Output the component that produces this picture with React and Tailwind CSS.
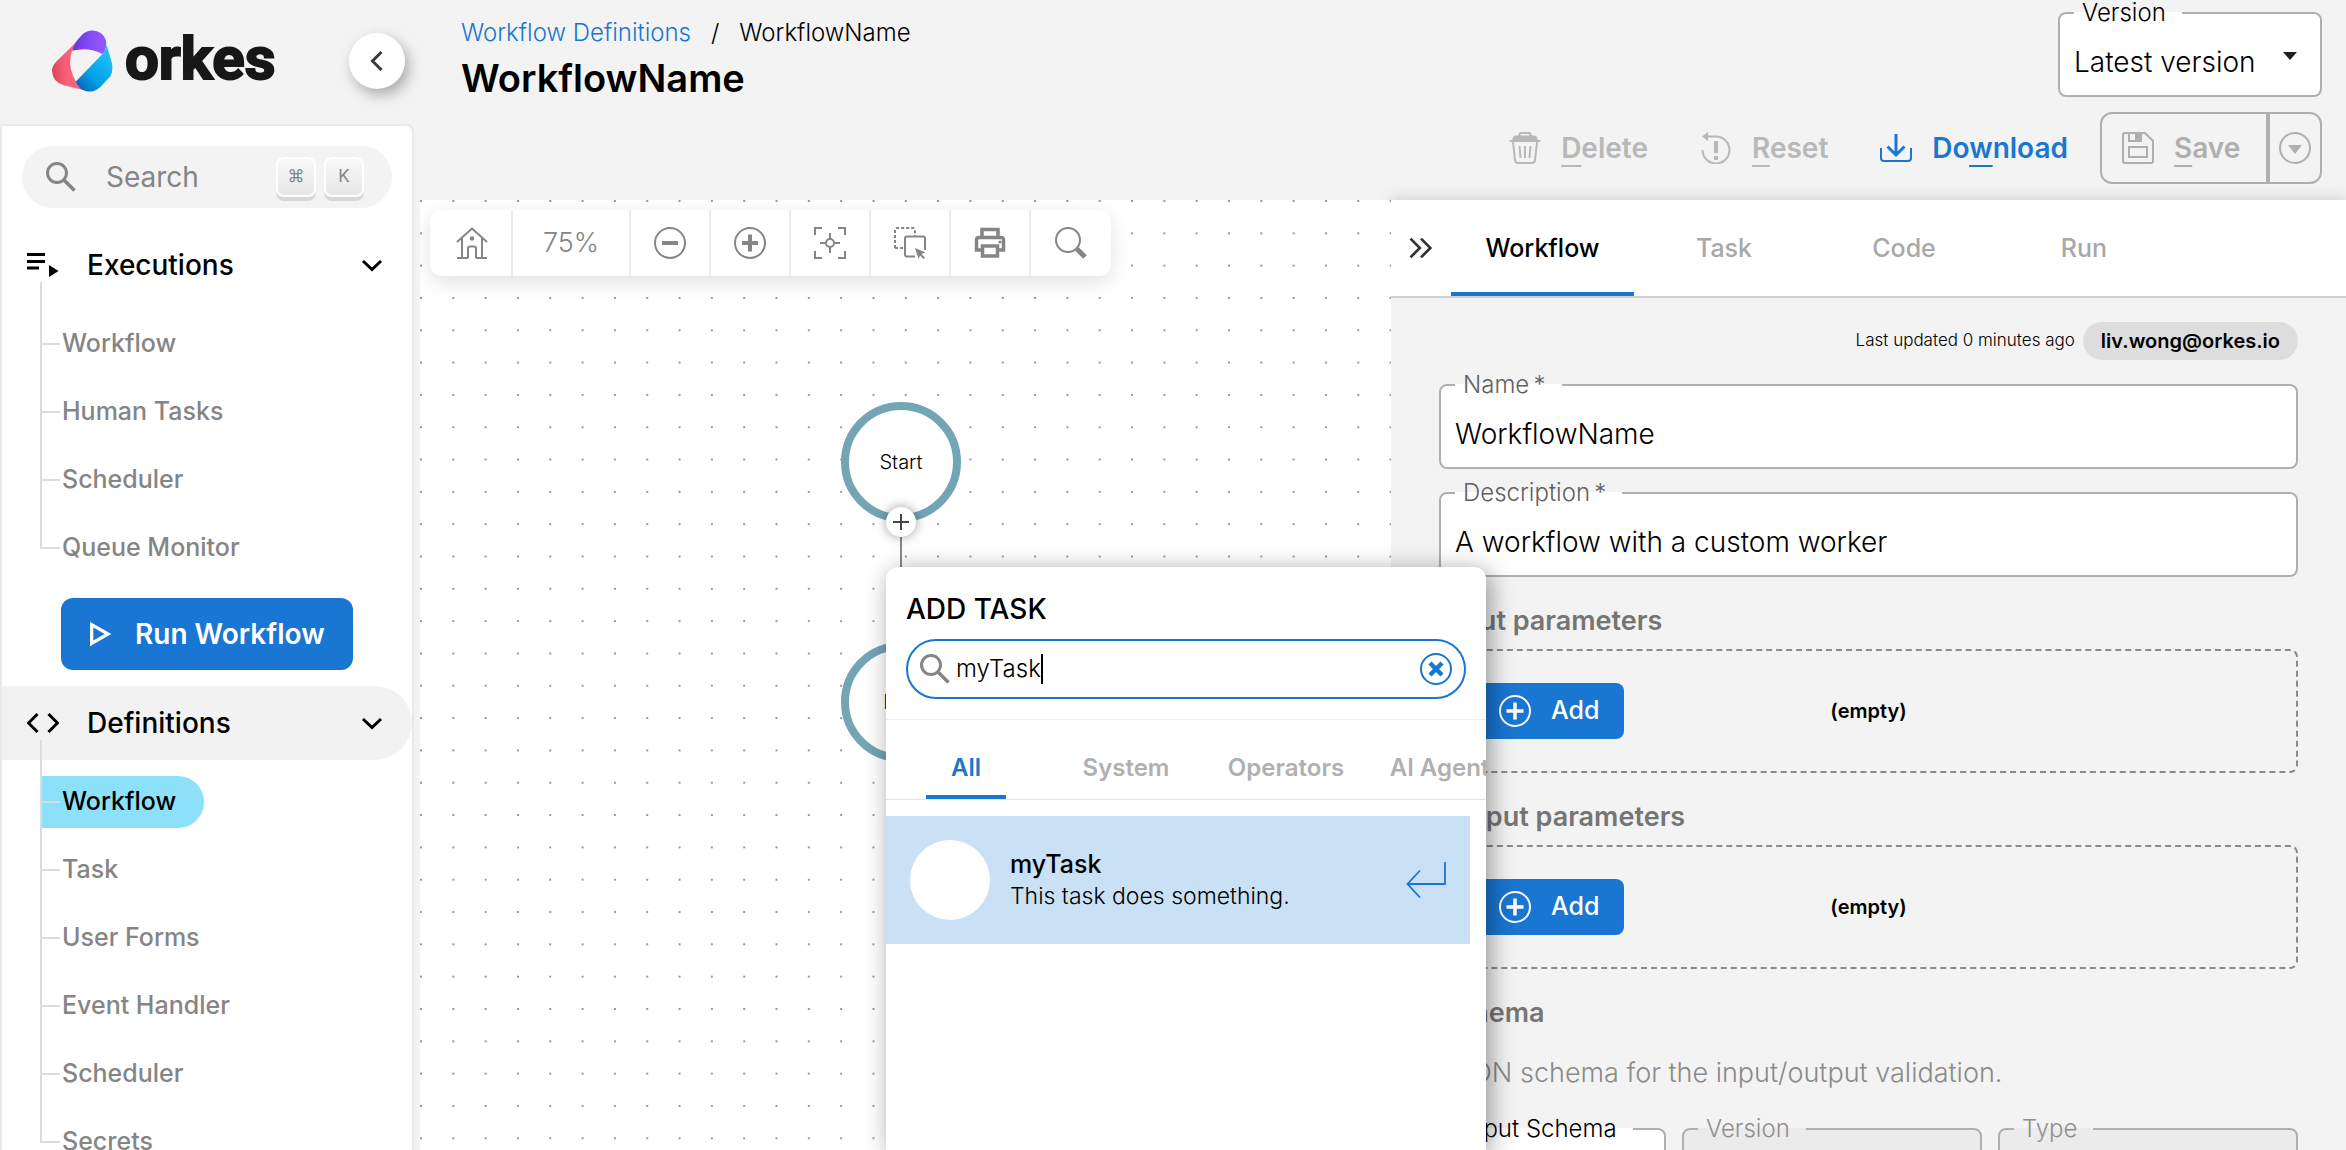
import { useState } from "react";

const EXECUTIONS = ["Workflow", "Human Tasks", "Scheduler", "Queue Monitor"];

const DEFINITIONS = [
  "Workflow",
  "Task",
  "User Forms",
  "Event Handler",
  "Scheduler",
  "Secrets",
];

const PANEL_TABS = ["Task", "Code", "Run"];
const TASK_TABS = ["All", "System", "Operators", "AI Agents"];

/* ICONS */
function Icon({ children, box = "0 0 32 32", className = "size-8" }) {
  return (
    <svg
      viewBox={box}
      className={`shrink-0 ${className}`}
      fill="none"
      stroke="currentColor"
      strokeWidth="2"
      aria-hidden="true"
    >
      {children}
    </svg>
  );
}

function LogoMark() {
  return (
    <svg viewBox="156 86 186 188" className="h-[62px] w-[61px] shrink-0" aria-hidden="true">
      <defs>
        <linearGradient id="red" x1="0" x2="1" y1="0.6" y2="0.5">
          <stop offset="0" stopColor="#d9465f" />
          <stop offset="0.5" stopColor="#fb6179" />
        </linearGradient>
        <linearGradient id="purple" x1="0" x2="1" y1="0.5" y2="0.5">
          <stop offset="0" stopColor="#6a35d9" />
          <stop offset="0.8" stopColor="#9156ff" />
        </linearGradient>
        <linearGradient id="blue" x1="0.2" x2="0.8" y1="1" y2="0.2">
          <stop offset="0" stopColor="#0068b8" />
          <stop offset="0.4" stopColor="#049fe8" />
          <stop offset="1" stopColor="#1abdf5" />
        </linearGradient>
      </defs>
      <path
        d="M240 112 L168 183 Q156 196 156 210 Q158 246 192 254 L248 268 L229 243 Q206 205 213 165 Q218 138 240 112Z"
        fill="url(#red)"
      />
      <path
        d="M310 159 Q321 146 323 132 L339 188 Q343 214 333 228 L300 262 Q286 273 270 273 Q252 272 241 262 L228 243Z"
        fill="url(#blue)"
      />
      <path
        d="M218 149 Q223 127 238 111 L250 98 Q262 87 280 87 Q310 88 320 116 Q326 140 310 159 Q268 136 218 149Z"
        fill="url(#purple)"
      />
    </svg>
  );
}

function SearchIcon({ className }) {
  return (
    <Icon box="0 0 30 30" className={className}>
      <circle cx="11" cy="11" r="9.5" strokeWidth="3" />
      <path d="M18 18 L28.5 28.5" strokeWidth="3.5" />
    </Icon>
  );
}

function PlusCircle() {
  return (
    <Icon>
      <circle cx="16" cy="16" r="15" />
      <path d="M16 7.5V24.5M7.5 16H24.5" strokeWidth="3.5" />
    </Icon>
  );
}

function ChevronDown() {
  return (
    <Icon box="0 0 24 24" className="size-6">
      <path d="M3 8 L12 16.500 L21 8" strokeWidth="3" />
    </Icon>
  );
}

/* SIDEBAR */
function NavGroup({ icon, label, items, active, highlighted, children }) {
  return (
    <div>
      <button
        type="button"
        className={`flex h-[74px] w-full items-center pr-7 pl-[25px] text-[28px] font-medium text-black ${
          highlighted ? "rounded-r-full bg-[#f2f2f2]" : ""
        }`}
      >
        {icon}
        <span className="ml-7 flex-1 text-left">{label}</span>
        <ChevronDown />
      </button>
      <ul className="relative mt-4 ml-[38px] flex flex-col gap-4">
        <li
          aria-hidden="true"
          className="absolute -top-9 bottom-[25px] left-0 w-0.5 bg-[#dcdcdc]"
        />
        {items.map((item) => (
          <li key={item} className="flex pl-0.5">
            <a
              href="#"
              className={`flex h-[52px] items-center rounded-r-full pr-7 text-[25px] font-medium ${
                item === active ? "bg-[#8ce0fa] text-black" : "text-[#858585]"
              }`}
            >
              <span className="mr-0.5 h-0.5 w-[18px] bg-[#dcdcdc]" />
              {item}
            </a>
          </li>
        ))}
      </ul>
      {children}
    </div>
  );
}

function KeyCap({ children }) {
  return (
    <kbd className="flex h-10 w-10 items-center justify-center rounded-lg border-2 border-white bg-gradient-to-b from-[#f8f8f8] to-[#e6e6e6] font-['Inter'] text-[17px] text-[#858585] shadow-[0_4px_0_#d8d8d8]">
      {children}
    </kbd>
  );
}

function Sidebar() {
  return (
    <aside className="flex w-[414px] shrink-0 flex-col">
      <div className="flex h-[124px] shrink-0 items-center pr-[9px] pb-[3px] pl-[52px]">
        <LogoMark />
        <span className="ml-3 flex-1 pb-1 font-['Roboto'] text-[60px] leading-none font-bold text-[#171717] [-webkit-text-stroke:2px_#171717]">
          orkes
        </span>
        <button
          type="button"
          aria-label="Collapse menu"
          className="flex size-14 items-center justify-center rounded-full bg-white text-[#3a3a3a] shadow-[4px_6px_14px_rgba(0,0,0,0.3)]"
        >
          <Icon box="0 0 24 24" className="size-6">
            <path d="M16.500 3 L7.500 12 L16.500 21" strokeWidth="3" />
          </Icon>
        </button>
      </div>

      <div className="flex-1 overflow-hidden rounded-tr-lg border-2 border-b-0 border-[#e9e9e9] bg-white">
        <div className="p-5">
          <label className="flex h-[62px] items-center rounded-full bg-[#f3f3f3] pr-7 pl-6 text-[#858585]">
            <SearchIcon className="size-[30px]" />
            <input
              type="text"
              placeholder="Search"
              aria-label="Search"
              className="ml-[30px] w-0 flex-1 text-[28px] outline-none placeholder:text-[#858585]"
            />
            <span className="flex gap-2">
              <KeyCap>⌘</KeyCap>
              <KeyCap>K</KeyCap>
            </span>
          </label>
        </div>

        <nav>
          <NavGroup
            label="Executions"
            items={EXECUTIONS}
            icon={
              <Icon>
                <path d="M0 5.500H18M0 12.500H18M0 19H12" strokeWidth="3" />
                <path d="M22 16 L31.500 22 L22 28Z" fill="currentColor" stroke="none" />
              </Icon>
            }
          >
            <button
              type="button"
              className="mt-6 mb-4 ml-[59px] flex h-[72px] w-[292px] items-center rounded-xl bg-[#1976d2] pl-[26px] text-[28px] font-semibold text-white"
            >
              <Icon box="0 0 24 24" className="size-7">
                <path d="M4 4 L18 12 L4 20Z" strokeWidth="2.800" />
              </Icon>
              <span className="ml-5">Run Workflow</span>
            </button>
          </NavGroup>

          <NavGroup
            label="Definitions"
            items={DEFINITIONS}
            active="Workflow"
            highlighted
            icon={
              <Icon>
                <path d="M10.500 7 L1.500 16 L10.500 25M21.500 7 L30.500 16 L21.500 25" strokeWidth="3" />
              </Icon>
            }
          />
        </nav>
      </div>
    </aside>
  );
}

/* OUTLINED FIELDS */
function Field({ id, label, labelColor = "text-[#5f5f5f]", bg = "bg-white", children }) {
  return (
    <fieldset className={`h-24 min-w-0 rounded-lg border-2 border-[#afafaf] px-3.5 ${bg}`}>
      <legend className={`h-6 pr-4 pl-2 text-[24px] leading-6 font-light ${labelColor}`}>
        <label htmlFor={id}>{label}</label>
      </legend>
      <div className="flex h-[68px] items-center pt-1.5">{children}</div>
    </fieldset>
  );
}

function Header() {
  return (
    <header className="flex h-[200px] shrink-0 justify-between pr-6 pl-[47px]">
      <div className="pt-[17px]">
        <nav className="flex gap-5 text-[24px] leading-8 font-light">
          <a href="#" className="text-[#1976d2]">
            Workflow Definitions
          </a>
          <span>/</span>
          <span>WorkflowName</span>
        </nav>
        <h1 className="mt-1.5 text-[38px] leading-[46px] font-semibold">WorkflowName</h1>
      </div>

      <div className="flex flex-col items-end pt-px">
        <div className="w-[264px]">
          <Field id="version" label="Version" labelColor="text-black">
            <select
              id="version"
              className="w-0 flex-1 appearance-none text-[28px] font-light outline-none"
            >
              <option>Latest version</option>
            </select>
            <Icon box="0 0 16 16" className="pointer-events-none mr-2 mb-3 size-4">
              <path d="M1 4H15L8 12Z" fill="#1f1f1f" stroke="none" />
            </Icon>
          </Field>
        </div>

        <div className="mt-[15px] flex h-[72px] items-center gap-8 text-[28px] font-semibold text-[#b8b8b8]">
          <div className="flex gap-13">
            <button type="button" disabled className="flex items-center gap-5">
              <Icon>
                <path d="M10.500 4V2.500Q10.500 1 12 1H20Q21.500 1 21.500 2.500V4" />
                <path d="M3 9Q3.500 3.500 7 3.500H25Q28.500 3.500 29 9Z" fill="currentColor" stroke="none" />
                <path d="M0.500 9H31.500M4 10 L6 28Q6.500 31 9 31H23Q25.500 31 26 28L28 10M10.500 14 L11.500 26M16 14V26M21.500 14 L20.500 26" />
              </Icon>
              <span>
                <span className="underline decoration-2 underline-offset-[7px]">D</span>elete
              </span>
            </button>
            <button type="button" disabled className="flex items-center gap-5">
              <Icon>
                <path d="M2.500 18A13.500 13.500 0 1 0 16 4.500H6" />
                <path d="M2 4.500 L8 0V9Z" fill="currentColor" stroke="none" />
                <path d="M16 9V21M16 24V28" strokeWidth="4" />
              </Icon>
              <span>
                <span className="underline decoration-2 underline-offset-[7px]">R</span>eset
              </span>
            </button>
            <button type="button" className="flex items-center gap-5 text-[#1976d2]">
              <Icon>
                <path d="M1 16V26Q1 29 4 29H28Q31 29 31 26V16" />
                <path d="M16 2V23M7.500 14.500 L16 23 L24.500 14.500" strokeWidth="3" />
              </Icon>
              <span>
                Do<span className="underline decoration-2 underline-offset-[7px]">w</span>nload
              </span>
            </button>
          </div>

          <div className="flex h-full rounded-xl border-2 border-[#afafaf] text-[#afafaf]">
            <button type="button" disabled className="flex w-[168px] items-center gap-5 border-r-4 border-[#afafaf] pl-5">
              <Icon>
                <path d="M1 3Q1 1 3 1H23L31 9V29Q31 31 29 31H3Q1 31 1 29Z" />
                <path d="M7 1V9H19V1M7 15H25V25H7Z" />
                <path d="M14 1H19V9H14Z" fill="currentColor" />
              </Icon>
              <span>
                <span className="underline decoration-2 underline-offset-[7px]">S</span>ave
              </span>
            </button>
            <button type="button" disabled aria-label="More save options" className="flex w-[50px] items-center justify-center">
              <Icon>
                <circle cx="16" cy="16" r="15" />
                <path d="M9 13H23L16 22Z" fill="currentColor" stroke="none" />
              </Icon>
            </button>
          </div>
        </div>
      </div>
    </header>
  );
}

/* CANVAS */
function ToolButton({ label, children }) {
  return (
    <button type="button" aria-label={label} className="flex w-20 items-center justify-center">
      <Icon>{children}</Icon>
    </button>
  );
}

function Toolbar() {
  return (
    <div className="absolute top-2.5 left-2.5 flex h-[66px] divide-x-2 divide-[#ececec] rounded-xl bg-white pl-[3px] text-[#858585] shadow-[0_6px_20px_rgba(0,0,0,0.12)]">
      <ToolButton label="Reset position">
        <path d="M1 15 L16 1.500 L31 15M6 11V31M26 11V31M1 31H12M20 31H31M12 31V21.500Q12 19.500 14 19.500H18Q20 19.500 20 21.500V31" />
        <circle cx="16" cy="11.500" r="2.200" fill="currentColor" stroke="none" />
      </ToolButton>
      <span className="flex w-[118px] items-center justify-center text-[27px] font-light">75%</span>
      <ToolButton label="Zoom out">
        <circle cx="16" cy="16" r="15" />
        <path d="M8 16H24" strokeWidth="4" />
      </ToolButton>
      <ToolButton label="Zoom in">
        <circle cx="16" cy="16" r="15" />
        <path d="M8 16H24M16 7.500V24.500" strokeWidth="4" />
      </ToolButton>
      <ToolButton label="Fit to screen">
        <path d="M1 8V1H8M24 1H31V8M31 24V31H24M8 31H1V24" />
        <circle cx="16" cy="16" r="4" />
        <path d="M16 6V12M16 20V26M6 16H12M20 16H26" />
      </ToolButton>
      <ToolButton label="Select">
        <path d="M1 21V3Q1 1 3 1H19Q21 1 21 3V9M1 21H9" strokeDasharray="3 2" />
        <path d="M21 29.500H13Q11 29.500 11 27.500V11.500Q11 9.500 13 9.500H29Q31 9.500 31 11.500V23" />
        <path d="M21 21 L31.500 25.500 L27.500 27 L31 30.500 L29.500 32 L26 28.500 L24.500 32Z" fill="currentColor" stroke="none" />
      </ToolButton>
      <ToolButton label="Print">
        <path d="M8 9V2.500H24V9M8 23H2.500V13Q2.500 10.500 5 10.500H27Q29.500 10.500 29.500 13V23H24" strokeWidth="3.500" />
        <path d="M8.500 19H23.500V29H8.500Z" strokeWidth="3.500" />
        <circle cx="26" cy="15" r="1.600" fill="currentColor" stroke="none" />
      </ToolButton>
      <ToolButton label="Search">
        <circle cx="13" cy="13" r="12" />
        <path d="M22 22 L30 30" strokeWidth="5" />
      </ToolButton>
    </div>
  );
}

function Canvas() {
  return (
    <section className="relative flex-1 overflow-hidden bg-white">
      <svg className="absolute inset-0 size-full" aria-hidden="true">
        <defs>
          <pattern id="dots" width="32.32" height="32.32" patternUnits="userSpaceOnUse">
            <circle cx="1" cy="1" r="1" fill="#777" />
          </pattern>
        </defs>
        <rect width="100%" height="100%" fill="url(#dots)" />
      </svg>

      <div className="absolute top-[320px] left-[480px] h-[124px] w-0.5 bg-[#888]" />
      <div className="absolute top-[202px] left-[421px] flex size-[120px] items-center justify-center rounded-full border-8 border-[#73a5b5] bg-white text-[20px] font-light">
        Start
      </div>
      <div className="absolute top-[442px] left-[421px] flex size-[120px] items-center justify-center rounded-full border-8 border-[#73a5b5] bg-white text-[20px] font-light">
        End
      </div>
      <button
        type="button"
        aria-label="Add task"
        className="absolute top-[307px] left-[466px] flex size-[30px] items-center justify-center rounded-full bg-white text-[#444] shadow-[0_0_12px_rgba(0,0,0,0.4)]"
      >
        <Icon box="0 0 16 16" className="size-4">
          <path d="M8 0V16M0 8H16" />
        </Icon>
      </button>

      <Toolbar />
    </section>
  );
}

/* DETAIL PANEL */
function ParameterBox({ title }) {
  return (
    <div>
      <h2 className="mt-4 text-[27px] leading-14 font-semibold text-[#757575]">{title}</h2>
      <div className="grid h-[124px] grid-cols-3 items-center rounded-lg border-2 border-dashed border-[#8a8a8a] px-8">
        <button
          type="button"
          className="flex h-14 w-[151px] items-center gap-5 rounded-lg bg-[#1976d2] pl-[26px] text-[25px] font-medium text-white"
        >
          <PlusCircle />
          Add
        </button>
        <span className="text-center text-[20px] font-semibold">(empty)</span>
      </div>
    </div>
  );
}

function DetailPanel() {
  const [name, setName] = useState("WorkflowName");
  const [description, setDescription] = useState("A workflow with a custom worker");

  return (
    <section className="w-[955px] shrink-0 bg-[#f3f3f3] shadow-[0_0_14px_rgba(0,0,0,0.18)]">
      <div className="flex h-[98px] border-b-2 border-[#d0d0d0] bg-white text-[25px] font-medium">
        <button type="button" aria-label="Collapse panel" className="flex w-15 items-center justify-center text-[#333]">
          <Icon box="0 0 24 24" className="size-7">
            <path d="M3 4 L11 12 L3 20M12 4 L20 12 L12 20" strokeWidth="2.300" />
          </Icon>
        </button>
        <button type="button" className="w-[183px] border-b-4 border-[#1976d2] pt-1.5">
          Workflow
        </button>
        {PANEL_TABS.map((tab) => (
          <button key={tab} type="button" className="w-[180px] pt-0.5 text-[#a8a8a8]">
            {tab}
          </button>
        ))}
      </div>

      <div className="px-12 pt-6">
        <div className="flex h-[38px] items-center justify-end gap-2">
          <span className="text-[17px] font-light">Last updated 0 minutes ago</span>
          <span className="flex h-full items-center rounded-full bg-[#dddddd] px-[18px] text-[20px] font-semibold">
            liv.wong@orkes.io
          </span>
        </div>

        <div className="mt-[13px] flex flex-col gap-3">
          <Field id="name" label={"Name\u2009*"}>
            <input
              id="name"
              type="text"
              value={name}
              onChange={(e) => setName(e.target.value)}
              className="w-full text-[28px] font-light outline-none"
            />
          </Field>
          <Field id="description" label={"Description\u2009*"}>
            <input
              id="description"
              type="text"
              value={description}
              onChange={(e) => setDescription(e.target.value)}
              className="w-full text-[28px] font-light outline-none"
            />
          </Field>
        </div>

        <ParameterBox title="Input parameters" />
        <ParameterBox title="Output parameters" />

        <h2 className="mt-4 text-[27px] leading-14 font-semibold text-[#757575]">Schema</h2>
        <p className="mt-3 text-[27px] leading-10 font-light text-[#8a8a8a]">
          JSON schema for the input/output validation.
        </p>
        <div className="mt-6 grid grid-cols-[1fr_300px_300px] gap-4">
          <Field id="schema" label="Input Schema" labelColor="text-black">
            <input id="schema" type="text" className="w-full text-[28px] outline-none" />
          </Field>
          <Field id="schema-version" label="Version" labelColor="text-[#8f8f8f]" bg="bg-[#ebebeb]">
            <input id="schema-version" type="text" disabled className="w-full text-[28px]" />
          </Field>
          <Field id="schema-type" label="Type" labelColor="text-[#8f8f8f]" bg="bg-[#ebebeb]">
            <input id="schema-type" type="text" disabled className="w-full text-[28px]" />
          </Field>
        </div>
      </div>
    </section>
  );
}

/* ADD TASK MENU */
function AddTaskMenu() {
  const [query, setQuery] = useState("myTask");
  const [tab, setTab] = useState("All");

  return (
    <div className="absolute top-[367px] bottom-0 left-[466px] w-[600px] overflow-hidden rounded-t-xl bg-white shadow-[4px_4px_24px_rgba(0,0,0,0.4)]">
      <div className="border-b border-[#ececec] px-5 pt-6 pb-5">
        <h2 className="text-[28px] leading-9 font-medium">ADD TASK</h2>
        <div className="mt-3 flex h-15 items-center rounded-full border-2 border-[#1976d2] px-3">
          <SearchIcon className="size-[30px] text-[#858585]" />
          <input
            type="text"
            aria-label="Search tasks"
            value={query}
            onChange={(e) => setQuery(e.target.value)}
            className="ml-1.5 [field-sizing:content] text-[24px] font-light caret-transparent outline-none"
          />
          <span className="h-[30px] w-0.5 bg-black" />
          <button type="button" aria-label="Clear" onClick={() => setQuery("")} className="ml-auto text-[#1976d2]">
            <Icon>
              <circle cx="16" cy="16" r="15" />
              <path d="M10 10 L22 22M22 10 L10 22" strokeWidth="4.500" />
            </Icon>
          </button>
        </div>
      </div>

      <div className="flex h-20 overflow-hidden border-b border-[#e4e4e4] text-[24px] font-semibold">
        {TASK_TABS.map((item) => (
          <button
            key={item}
            type="button"
            onClick={() => setTab(item)}
            className={`relative w-40 shrink-0 pt-4 ${
              item === tab
                ? "text-[#1976d2] after:absolute after:bottom-0 after:left-10 after:h-1 after:w-20 after:bg-[#1976d2]"
                : "text-[#b0b0b0]"
            }`}
          >
            {item}
          </button>
        ))}
      </div>

      <button type="button" className="mt-4 flex h-32 w-[584px] items-center bg-[#cae0f5] pr-6 pl-6 text-left">
        <span className="size-20 rounded-full bg-white" />
        <span className="ml-5 flex flex-1 flex-col leading-8">
          <span className="text-[25px] font-medium">myTask</span>
          <span className="text-[23px] font-light">This task does something.</span>
        </span>
        <Icon box="0 0 40 36" className="h-9 w-10 text-[#1976d2]">
          <path d="M39 0V22H1.500M14 8.500 L1.500 22 L14 35.500" strokeWidth="1.800" />
        </Icon>
      </button>
    </div>
  );
}

export default function App() {
  return (
    <div className="flex h-screen overflow-hidden bg-[#f3f3f3] font-['Inter',sans-serif] text-black">
      <Sidebar />
      <main className="flex min-w-0 flex-1 flex-col">
        <Header />
        <div className="relative ml-1.5 flex min-h-0 flex-1">
          <Canvas />
          <DetailPanel />
          <AddTaskMenu />
        </div>
      </main>
    </div>
  );
}
